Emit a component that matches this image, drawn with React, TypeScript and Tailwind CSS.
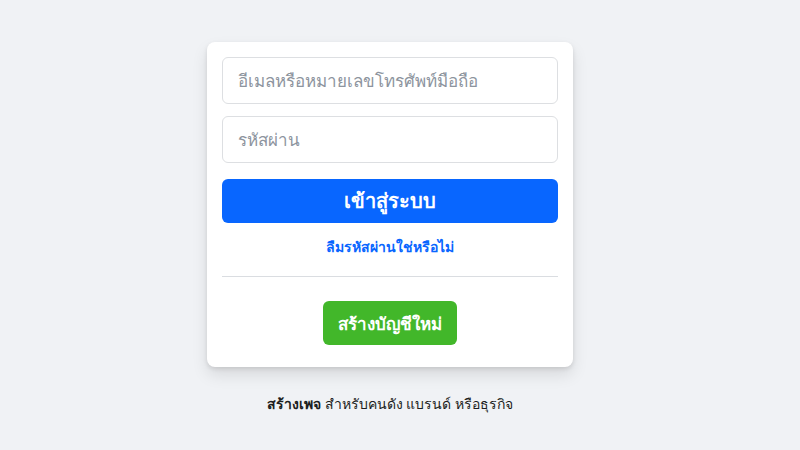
export default function App() {
  return (
    <div className="min-h-screen w-full bg-[#f0f2f5] flex flex-col items-center pt-[42px] pr-[20px] font-['Noto_Sans','Liberation_Sans',sans-serif]">
      <div className="w-[366px] bg-white rounded-lg shadow-[0_2px_4px_rgba(0,0,0,0.1),0_8px_16px_rgba(0,0,0,0.1)] px-[15px] pt-[15px] pb-[22px] flex flex-col items-center">
        <input
          className="w-full h-[47px] rounded-md border border-[#dddfe2] px-[15px] text-[17px] text-[#1c1e21] placeholder:text-[#8d949e] outline-none"
          placeholder="อีเมลหรือหมายเลขโทรศัพท์มือถือ"
        />
        <input
          type="password"
          className="mt-[12px] w-full h-[47px] rounded-md border border-[#dddfe2] px-[15px] text-[17px] text-[#1c1e21] placeholder:text-[#8d949e] outline-none"
          placeholder="รหัสผ่าน"
        />
        <button className="mt-[16px] w-full h-[44px] rounded-md bg-[#0866ff] text-white text-[20px] font-bold leading-none">
          เข้าสู่ระบบ
        </button>
        <a className="mt-[14px] text-[14px] font-semibold text-[#0866ff] leading-[19px]" href="#">
          ลืมรหัสผ่านใช่หรือไม่
        </a>
        <div className="mt-[20px] w-full h-px bg-[#dadde1]" />
        <button className="mt-[24px] h-[44px] px-[15px] rounded-md bg-[#42b72a] text-white text-[17px] font-bold leading-none">
          สร้างบัญชีใหม่
        </button>
      </div>
      <p className="mt-[26px] text-[14px] text-[#1c1e21]">
        <span className="font-bold">สร้างเพจ</span> สำหรับคนดัง แบรนด์ หรือธุรกิจ
      </p>
    </div>
  );
}
